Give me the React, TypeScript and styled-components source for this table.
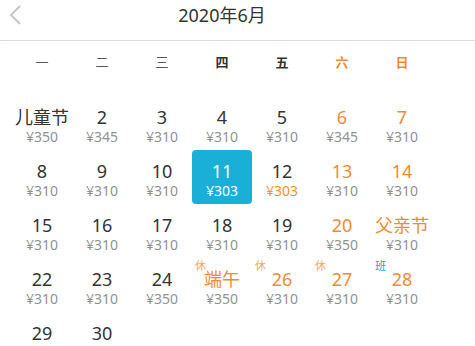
import styled, { createGlobalStyle } from "styled-components";

type Day = {
  label: string;
  price?: string;
  weekend?: boolean;
  selected?: boolean;
  lowest?: boolean;
  tag?: "休" | "班";
};

const GlobalStyle = createGlobalStyle`
  html, body {
    margin: 0;
    padding: 0;
    background: #fff;
    font-family: "Noto Sans", "Noto Sans CJK SC", sans-serif;
    overflow: hidden;
  }
`;

const weekdays = ["一", "二", "三", "四", "五", "六", "日"];

const days: Day[] = [
  { label: "儿童节", price: "350" },
  { label: "2", price: "345" },
  { label: "3", price: "310" },
  { label: "4", price: "310" },
  { label: "5", price: "310" },
  { label: "6", price: "345", weekend: true },
  { label: "7", price: "310", weekend: true },
  { label: "8", price: "310" },
  { label: "9", price: "310" },
  { label: "10", price: "310" },
  { label: "11", price: "303", selected: true },
  { label: "12", price: "303", lowest: true },
  { label: "13", price: "310", weekend: true },
  { label: "14", price: "310", weekend: true },
  { label: "15", price: "310" },
  { label: "16", price: "310" },
  { label: "17", price: "310" },
  { label: "18", price: "310" },
  { label: "19", price: "310" },
  { label: "20", price: "350", weekend: true },
  { label: "父亲节", price: "310", weekend: true },
  { label: "22", price: "310" },
  { label: "23", price: "310" },
  { label: "24", price: "350" },
  { label: "端午", price: "350", weekend: true, tag: "休" },
  { label: "26", price: "310", weekend: true, tag: "休" },
  { label: "27", price: "310", weekend: true, tag: "休" },
  { label: "28", price: "310", weekend: true, tag: "班" },
  { label: "29" },
  { label: "30" },
];

export default function App() {
  return (
    <>
      <GlobalStyle />
      <Page>
        <Header>
          <BackButton aria-label="上个月">
            <svg width="16" height="22" viewBox="0 0 16 22">
              <polyline
                points="12,2 3,11 12,20"
                fill="none"
                stroke="#c4c4c4"
                strokeWidth="1.8"
              />
            </svg>
          </BackButton>
          <Title>2020年6月</Title>
        </Header>
        <Divider />
        <Week>
          {weekdays.map((w, i) => (
            <WeekLabel key={w} $weekend={i > 4} $strong={i === 3 || i === 4}>
              {w}
            </WeekLabel>
          ))}
        </Week>
        <Grid>
          {days.map((d, i) => (
            <Cell key={i} $selected={d.selected}>
              {d.tag && <Tag $work={d.tag === "班"}>{d.tag}</Tag>}
              <DayNum $weekend={d.weekend} $selected={d.selected}>
                {d.label}
              </DayNum>
              {d.price && (
                <Price $selected={d.selected} $lowest={d.lowest}>
                  ¥{d.price}
                </Price>
              )}
            </Cell>
          ))}
        </Grid>
      </Page>
    </>
  );
}

const Page = styled.div`
  width: 475px;
  height: 346px;
  overflow: hidden;
`;

const Header = styled.div`
  position: relative;
  height: 30px;
  width: 444px;
  display: flex;
  align-items: center;
  justify-content: center;
`;

const BackButton = styled.div`
  position: absolute;
  left: 8px;
  top: 4px;
  display: flex;
`;

const Title = styled.div`
  font-size: 18px;
  color: #333;
  line-height: 30px;
  margin-top: -1px;
`;

const Divider = styled.div`
  margin-top: 10px;
  height: 1px;
  background: #dcdcdc;
  box-shadow: 0 2px 3px rgba(0, 0, 0, 0.04);
`;

const Week = styled.div`
  display: grid;
  grid-template-columns: repeat(7, 60px);
  margin-left: 12px;
  height: 41px;
  align-items: center;
`;

const WeekLabel = styled.div<{ $weekend?: boolean; $strong?: boolean }>`
  text-align: center;
  font-size: 13px;
  font-weight: ${({ $strong, $weekend }) => ($strong || $weekend ? 700 : 400)};
  color: ${({ $weekend, $strong }) =>
    $weekend ? "#f08a34" : $strong ? "#333" : "#555"};
`;

const Grid = styled.div`
  display: grid;
  grid-template-columns: repeat(7, 60px);
  grid-auto-rows: 54px;
  margin: 14px 0 0 12px;
`;

const Cell = styled.div<{ $selected?: boolean }>`
  position: relative;
  display: flex;
  flex-direction: column;
  align-items: center;
  padding-top: 10px;
  box-sizing: border-box;
  border-radius: 4px;
  background: ${({ $selected }) => ($selected ? "#19afd7" : "transparent")};
`;

const DayNum = styled.div<{ $weekend?: boolean; $selected?: boolean }>`
  font-size: 18px;
  line-height: 22px;
  white-space: nowrap;
  color: ${({ $weekend, $selected }) =>
    $selected ? "#fff" : $weekend ? "#ef8b36" : "#333"};
`;

const Price = styled.div<{ $selected?: boolean; $lowest?: boolean }>`
  font-size: 14px;
  line-height: 18px;
  color: ${({ $selected, $lowest }) =>
    $selected ? "#fff" : $lowest ? "#f3922f" : "#929292"};
`;

const Tag = styled.span<{ $work?: boolean }>`
  position: absolute;
  left: 3px;
  top: 2px;
  font-size: 11px;
  line-height: 12px;
  color: ${({ $work }) => ($work ? "#1aa3cf" : "#f4a760")};
`;
